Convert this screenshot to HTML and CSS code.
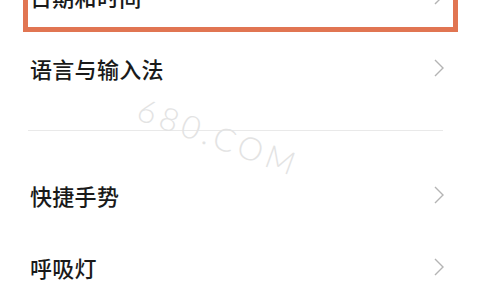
FILE: index.html
```html
<!DOCTYPE html>
<html lang="zh-CN">
<head>
<meta charset="utf-8">
<title>设置</title>
<link rel="stylesheet" href="styles.css">
</head>
<body>
<div class="list">
  <div class="row selected">
    <span class="label">日期和时间</span>
    <svg class="chev" viewBox="0 0 10 18" width="10" height="18"><polyline points="1,1 9,9 1,17"/></svg>
  </div>
  <div class="row">
    <span class="label">语言与输入法</span>
    <svg class="chev" viewBox="0 0 10 18" width="10" height="18"><polyline points="1,1 9,9 1,17"/></svg>
  </div>
  <div class="divider"></div>
  <div class="row">
    <span class="label">快捷手势</span>
    <svg class="chev" viewBox="0 0 10 18" width="10" height="18"><polyline points="1,1 9,9 1,17"/></svg>
  </div>
  <div class="row">
    <span class="label">呼吸灯</span>
    <svg class="chev" viewBox="0 0 10 18" width="10" height="18"><polyline points="1,1 9,9 1,17"/></svg>
  </div>
</div>
<div class="watermark">680.COM</div>
</body>
</html>
```
FILE: styles.css
```css
html, body {
  margin: 0;
  padding: 0;
  background: #ffffff;
  overflow: hidden;
}
body {
  position: relative;
  width: 480px;
  height: 300px;
  font-family: "Noto Sans CJK SC", "Noto Sans", sans-serif;
}
.list {
  margin-top: -40px;
  display: flex;
  flex-direction: column;
}
.row {
  position: relative;
  height: 72px;
  display: flex;
  align-items: center;
  justify-content: space-between;
  padding: 0 36px 0 30px;
}
.label {
  font-size: 22px;
  font-weight: 500;
  color: #1a1a1a;
  letter-spacing: 0.3px;
}
.chev {
  fill: none;
  stroke: #b4b4b4;
  stroke-width: 1.4;
}
.selected::after {
  content: "";
  position: absolute;
  left: 23px;
  right: 22px;
  top: 0;
  bottom: 0;
  border: 5px solid #e17552;
}
.divider {
  height: 1px;
  background: #e9e9e9;
  margin: 26px 37px 28px 28px;
}
.watermark {
  position: absolute;
  left: 146px;
  top: 89px;
  font-family: "Lato", "DejaVu Sans", sans-serif;
  font-weight: 300;
  font-size: 32px;
  letter-spacing: 4.5px;
  color: #e3e3e3;
  transform: rotate(20deg);
  transform-origin: 0 0;
}
```
